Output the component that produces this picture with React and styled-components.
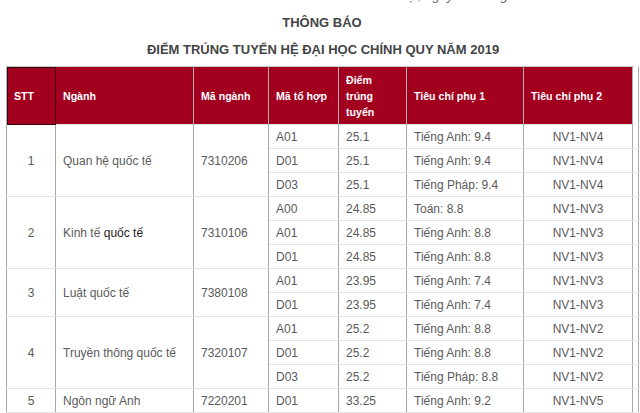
import React from 'react'
import styled, { createGlobalStyle } from 'styled-components'

const GlobalStyle = createGlobalStyle`
  html, body {
    margin: 0;
    padding: 0;
    background: #fff;
  }
  body {
    font-family: 'Liberation Sans', Arial, sans-serif;
    overflow: hidden;
  }
`

const data = [
  {
    stt: 1,
    name: 'Quan hệ quốc tế',
    code: '7310206',
    rows: [
      ['A01', '25.1', 'Tiếng Anh: 9.4', 'NV1-NV4'],
      ['D01', '25.1', 'Tiếng Anh: 9.4', 'NV1-NV4'],
      ['D03', '25.1', 'Tiếng Pháp: 9.4', 'NV1-NV4'],
    ],
  },
  {
    stt: 2,
    name: (
      <>
        Kinh tế <Dark>quốc tế</Dark>
      </>
    ),
    code: '7310106',
    rows: [
      ['A00', '24.85', 'Toán: 8.8', 'NV1-NV3'],
      ['A01', '24.85', 'Tiếng Anh: 8.8', 'NV1-NV3'],
      ['D01', '24.85', 'Tiếng Anh: 8.8', 'NV1-NV3'],
    ],
  },
  {
    stt: 3,
    name: 'Luật quốc tế',
    code: '7380108',
    rows: [
      ['A01', '23.95', 'Tiếng Anh: 7.4', 'NV1-NV3'],
      ['D01', '23.95', 'Tiếng Anh: 7.4', 'NV1-NV3'],
    ],
  },
  {
    stt: 4,
    name: 'Truyền thông quốc tế',
    code: '7320107',
    rows: [
      ['A01', '25.2', 'Tiếng Anh: 8.8', 'NV1-NV2'],
      ['D01', '25.2', 'Tiếng Anh: 8.8', 'NV1-NV2'],
      ['D03', '25.2', 'Tiếng Pháp: 8.8', 'NV1-NV2'],
    ],
  },
  {
    stt: 5,
    name: 'Ngôn ngữ Anh',
    code: '7220201',
    rows: [['D01', '33.25', 'Tiếng Anh: 9.2', 'NV1-NV5']],
  },
]

function Dark({ children }) {
  return <DarkText>{children}</DarkText>
}

export default function App() {
  return (
    <Page>
      <GlobalStyle />
      <DateStrip>
        <DateLine>Hà Nội, ngày 09 tháng 8 năm 2019</DateLine>
      </DateStrip>
      <Title>THÔNG BÁO</Title>
      <Subtitle>ĐIỂM TRÚNG TUYỂN HỆ ĐẠI HỌC CHÍNH QUY NĂM 2019</Subtitle>

      <TableWrap>
        <Table>
          <colgroup>
            <col style={{ width: 49 }} />
            <col style={{ width: 138 }} />
            <col style={{ width: 75 }} />
            <col style={{ width: 70 }} />
            <col style={{ width: 68 }} />
            <col style={{ width: 117 }} />
            <col style={{ width: 109 }} />
            <col style={{ width: 6 }} />
            <col style={{ width: 40 }} />
          </colgroup>
          <thead>
            <tr>
              <Th $selected>STT</Th>
              <Th>Ngành</Th>
              <Th>Mã ngành</Th>
              <Th>Mã tổ hợp</Th>
              <Th>
                Điểm
                <br />
                trúng
                <br />
                tuyển
              </Th>
              <Th>Tiêu chí phụ 1</Th>
              <Th>Tiêu chí phụ 2</Th>
              <Spacer />
              <Spacer />
            </tr>
          </thead>
          <tbody>
            {data.map((group) =>
              group.rows.map((r, i) => (
                <tr key={`${group.stt}-${i}`}>
                  {i === 0 && (
                    <>
                      <Td rowSpan={group.rows.length} $align="center">
                        {group.stt}
                      </Td>
                      <Td rowSpan={group.rows.length}>{group.name}</Td>
                      <Td rowSpan={group.rows.length}>{group.code}</Td>
                    </>
                  )}
                  <Td>{r[0]}</Td>
                  <Td>{r[1]}</Td>
                  <Td>{r[2]}</Td>
                  <Td $align="center">{r[3]}</Td>
                  <Spacer />
                  <Spacer />
                </tr>
              ))
            )}
          </tbody>
        </Table>
      </TableWrap>
    </Page>
  )
}

const Page = styled.div`
  width: 640px;
  height: 413px;
  overflow: hidden;
  color: #444;
`

const DateStrip = styled.div`
  height: 4px;
  overflow: hidden;
  display: flex;
  justify-content: flex-end;
  padding-right: 60px;
`

const DateLine = styled.div`
  margin-top: -12px;
  font-size: 13px;
  line-height: 16px;
  font-style: italic;
  color: #666;
  white-space: nowrap;
`

const Title = styled.h1`
  margin: 10px 0 0;
  font-size: 13px;
  font-weight: bold;
  line-height: 18px;
  text-align: center;
  color: #444;
  padding-left: 4px;
`

const Subtitle = styled.h2`
  margin: 9px 0 0;
  font-size: 13px;
  font-weight: bold;
  line-height: 18px;
  text-align: center;
  color: #444;
  padding-left: 6px;
`

const TableWrap = styled.div`
  margin-top: 7px;
  padding-left: 6px;
`

const Table = styled.table`
  border-collapse: collapse;
  table-layout: fixed;
  width: 672px;
  font-size: 12px;
`

const Th = styled.th`
  background: #a3001f;
  color: #fff;
  font-size: 10.6px;
  font-weight: bold;
  text-align: left;
  padding: 0 7px;
  height: 57px;
  line-height: 16px;
  border-left: 1px solid #b0b0b0;
  border-right: 1px solid #b0b0b0;
  border-top: 1px solid #c8c8c8;
  outline: ${(p) => (p.$selected ? '1px solid #3b0610' : 'none')};
  outline-offset: -1px;
`

const Td = styled.td`
  height: 24px;
  padding: 0 7px;
  box-sizing: border-box;
  text-align: ${(p) => p.$align || 'left'};
  color: #5a5a5a;
  white-space: nowrap;
  border-left: 1px solid #a8a8a8;
  border-right: 1px solid #a8a8a8;
  border-top: 1px solid #e4e4e4;
  border-bottom: 1px solid #e4e4e4;
`

const Spacer = styled.td`
  background: #fff;
  border-left: 1px solid #a8a8a8;
  border-top: 1px solid #ececec;
  border-bottom: 1px solid #ececec;
`

const DarkText = styled.span`
  color: #222;
`
